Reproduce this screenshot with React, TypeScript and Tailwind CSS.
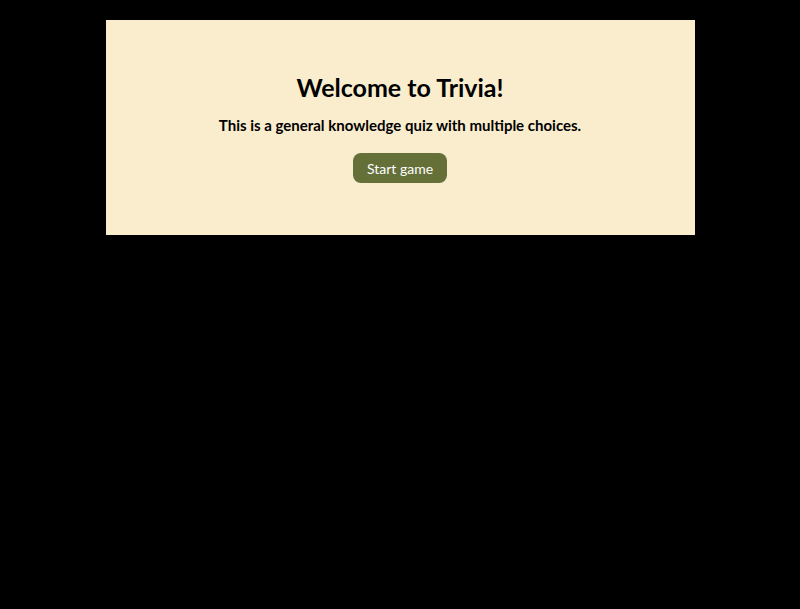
const App = () => {
  return (
    <div
      className="min-h-screen bg-black pt-5"
      style={{ fontFamily: 'Lato, "Liberation Sans", sans-serif' }}
    >
      <div className="mx-auto flex h-[215px] w-[589px] flex-col items-center bg-[#faedcd] pt-[52px]">
        <h1 className="text-[25px] font-bold leading-[30px] text-black">Welcome to Trivia!</h1>
        <p className="mt-[14px] text-[15px] font-bold leading-[18px] text-black">
          This is a general knowledge quiz with multiple choices.
        </p>
        <button className="mt-[19px] h-[30px] rounded-lg bg-[#657039] px-[14px] text-[14px] text-white">
          Start game
        </button>
      </div>
    </div>
  );
};

export default App;
